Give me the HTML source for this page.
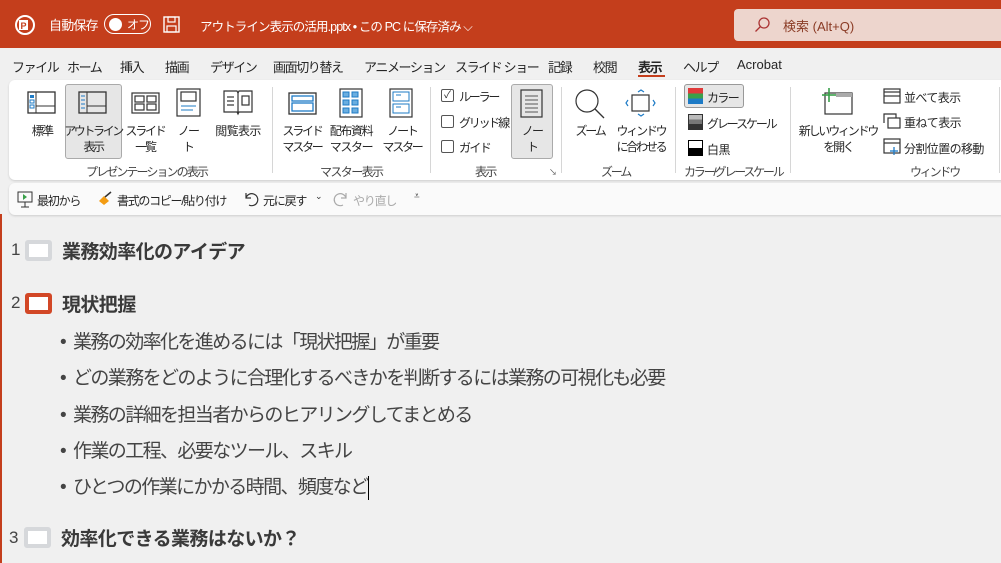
<!DOCTYPE html>
<html><head><meta charset="utf-8"><style>
*{margin:0;padding:0;box-sizing:border-box}
body{width:1001px;height:563px;overflow:hidden;background:#f0f0f0;font-family:"Liberation Sans","Noto Sans CJK JP",sans-serif;position:relative;color:#262626}
.a{position:absolute;white-space:nowrap}
.t{font-size:12px;color:#262626;letter-spacing:-1.6px}
.c{text-align:center;font-size:12px;line-height:16px;letter-spacing:-1.8px}
.tab{position:absolute;top:57px;font-size:13px;letter-spacing:-1.4px;white-space:nowrap}
.sep{position:absolute;width:1px;background:#d6d6d6;top:87px;height:86px}
.gl{position:absolute;font-size:12px;color:#444;top:163px;letter-spacing:-1.6px;white-space:nowrap}
.b{position:absolute;left:60px;font-size:19px;color:#444;line-height:24px;letter-spacing:-1.6px;white-space:nowrap}
.b i{font-style:normal;display:inline-block;width:13px;letter-spacing:0}
.h{position:absolute;font-size:19px;font-weight:bold;color:#3a3a3a;letter-spacing:-0.6px;white-space:nowrap}
</style></head><body>
<div class="a" style="left:0;top:0;width:1001px;height:48px;background:#c43e1c"></div>
<svg class="a" style="left:14px;top:14px" width="22" height="22"><circle cx="11" cy="11" r="9" fill="none" stroke="#fff" stroke-width="2"/><rect x="5" y="6" width="9" height="10" fill="#fff"/><text x="6.5" y="15" font-size="9" font-weight="bold" fill="#c43e1c" font-family="Liberation Sans">P</text></svg>
<div class="a" style="left:49px;top:15px;color:#fff;font-size:13px;letter-spacing:-0.8px">自動保存</div>
<div class="a" style="left:104px;top:14px;width:47px;height:20px;border:1.5px solid #fff;border-radius:10px"></div>
<div class="a" style="left:109px;top:18px;width:13px;height:13px;border-radius:50%;background:#fff"></div>
<div class="a" style="left:127px;top:16px;color:#fff;font-size:12px;letter-spacing:-1px">オフ</div>
<svg class="a" style="left:163px;top:16px" width="17" height="17"><rect x="1" y="1" width="15" height="15" fill="none" stroke="#fff" stroke-width="1.4"/><rect x="5" y="1" width="7" height="5" fill="none" stroke="#fff" stroke-width="1.2"/><rect x="4" y="10" width="9" height="6" fill="none" stroke="#fff" stroke-width="1.2"/></svg>
<div class="a" style="left:200px;top:16px;color:#fff;font-size:12.5px;letter-spacing:-0.9px">アウトライン表示の活用.pptx • この PC に保存済み ⌵</div>
<div class="a" style="left:734px;top:9px;width:267px;height:32px;background:#edd5cd;border-radius:4px 0 0 4px"></div>
<svg class="a" style="left:754px;top:17px" width="16" height="16"><circle cx="10" cy="6" r="5" fill="none" stroke="#a33" stroke-width="1.3"/><line x1="6.5" y1="9.5" x2="1.5" y2="14.5" stroke="#a33" stroke-width="1.3"/></svg>
<div class="a" style="left:783px;top:16px;font-size:13px;color:#8a3b25">検索 (Alt+Q)</div>
<div class="tab" style="left:12px">ファイル</div>
<div class="tab" style="left:67px">ホーム</div>
<div class="tab" style="left:120px">挿入</div>
<div class="tab" style="left:165px">描画</div>
<div class="tab" style="left:210px">デザイン</div>
<div class="tab" style="left:273px">画面切り替え</div>
<div class="tab" style="left:364px">アニメーション</div>
<div class="tab" style="left:455px">スライド ショー</div>
<div class="tab" style="left:548px">記録</div>
<div class="tab" style="left:593px">校閲</div>
<div class="tab" style="left:638px;font-weight:bold">表示</div>
<div class="a" style="top:75px;left:638px;width:27px;height:2px;background:#c43e1c"></div>
<div class="tab" style="left:683px">ヘルプ</div>
<div class="tab" style="left:737px;letter-spacing:0">Acrobat</div>
<div class="a" style="left:9px;top:80px;width:1000px;height:100px;background:#fff;border-radius:6px;box-shadow:0 1px 2px #ccc"></div>
<div class="a" style="left:65px;top:84px;width:57px;height:75px;background:#e6e6e6;border:1px solid #aaa;border-radius:3px"></div>
<div class="a" style="left:511px;top:84px;width:42px;height:75px;background:#e6e6e6;border:1px solid #aaa;border-radius:3px"></div>
<svg class="a" style="left:27px;top:91px" width="30" height="24"><rect x="1" y="1" width="27" height="21" fill="none" stroke="#333" stroke-width="1.3"/><line x1="9" y1="1" x2="9" y2="22" stroke="#333"/><line x1="9" y1="15" x2="28" y2="15" stroke="#333"/><rect x="3" y="4" width="4" height="3" fill="#1e7bc6"/><rect x="3" y="9" width="4" height="3" fill="none" stroke="#1e7bc6"/><rect x="3" y="14" width="4" height="3" fill="none" stroke="#1e7bc6"/></svg>
<svg class="a" style="left:78px;top:91px" width="30" height="24"><rect x="1" y="1" width="27" height="21" fill="none" stroke="#333" stroke-width="1.3"/><line x1="9" y1="1" x2="9" y2="22" stroke="#333"/><line x1="9" y1="15" x2="28" y2="15" stroke="#333"/><g stroke="#1e7bc6"><line x1="3" y1="5" x2="7" y2="5"/><line x1="3" y1="9" x2="7" y2="9"/><line x1="3" y1="13" x2="7" y2="13"/><line x1="3" y1="17" x2="7" y2="17"/></g></svg>
<svg class="a" style="left:131px;top:92px" width="30" height="22"><g fill="none" stroke="#333" stroke-width="1.2"><rect x="1" y="1" width="27" height="20"/><rect x="4" y="4" width="9" height="6"/><rect x="16" y="4" width="9" height="6"/><rect x="4" y="12" width="9" height="6"/><rect x="16" y="12" width="9" height="6"/></g></svg>
<svg class="a" style="left:176px;top:88px" width="26" height="30"><g fill="none" stroke="#333" stroke-width="1.2"><rect x="1" y="1" width="23" height="27"/><rect x="5" y="4" width="15" height="9"/></g><g stroke="#1e7bc6"><line x1="5" y1="18" x2="20" y2="18"/><line x1="5" y1="22" x2="17" y2="22"/></g></svg>
<svg class="a" style="left:222px;top:89px" width="32" height="28"><g fill="none" stroke="#333" stroke-width="1.2"><path d="M2 2h13l1 2 1-2h13v21H17l-1 2-1-2H2z"/><line x1="16" y1="4" x2="16" y2="24"/><line x1="5" y1="8" x2="12" y2="8"/><line x1="5" y1="12" x2="12" y2="12"/><line x1="5" y1="16" x2="12" y2="16"/><rect x="20" y="7" width="7" height="9"/></g></svg>
<div class="a c" style="left:22px;top:123px;width:40px">標準</div>
<div class="a c" style="left:63px;top:123px;width:60px;letter-spacing:-2.4px">アウトライン<br>表示</div>
<div class="a c" style="left:124px;top:123px;width:42px;letter-spacing:-2.2px">スライド<br>一覧</div>
<div class="a c" style="left:174px;top:123px;width:28px">ノー<br>ト</div>
<div class="a c" style="left:210px;top:123px;width:56px;letter-spacing:-0.6px">閲覧表示</div>
<div class="gl" style="left:86px;letter-spacing:-1.9px">プレゼンテーションの表示</div>
<div class="sep" style="left:272px"></div>
<svg class="a" style="left:288px;top:92px" width="30" height="24"><g fill="none" stroke="#1e7bc6" stroke-width="1.3"><rect x="1" y="1" width="27" height="21" stroke="#333"/><rect x="4" y="4" width="21" height="5"/><rect x="4" y="11" width="21" height="8"/></g></svg>
<svg class="a" style="left:339px;top:88px" width="24" height="30"><rect x="1" y="1" width="22" height="28" fill="none" stroke="#333" stroke-width="1.2"/><g fill="#6aaee0" stroke="#1e7bc6"><rect x="4" y="4" width="6" height="5"/><rect x="13" y="4" width="6" height="5"/><rect x="4" y="12" width="6" height="5"/><rect x="13" y="12" width="6" height="5"/><rect x="4" y="20" width="6" height="5"/><rect x="13" y="20" width="6" height="5"/></g></svg>
<svg class="a" style="left:389px;top:88px" width="24" height="30"><rect x="1" y="1" width="22" height="28" fill="none" stroke="#333" stroke-width="1.2"/><g fill="none" stroke="#1e7bc6"><rect x="4" y="4" width="16" height="9"/><rect x="4" y="16" width="16" height="9"/><line x1="7" y1="7" x2="12" y2="7"/><line x1="7" y1="19" x2="12" y2="19"/></g></svg>
<div class="a c" style="left:280px;top:123px;width:44px;letter-spacing:-2.2px">スライド<br>マスター</div>
<div class="a c" style="left:325px;top:123px;width:52px;letter-spacing:-1.4px">配布資料<br>マスター</div>
<div class="a c" style="left:380px;top:123px;width:44px;letter-spacing:-2.2px">ノート<br>マスター</div>
<div class="gl" style="left:320px">マスター表示</div>
<div class="sep" style="left:430px"></div>
<div class="a" style="left:441px;top:89px;width:13px;height:13px;border:1px solid #555;border-radius:2px;font-size:10px;line-height:11px;text-align:center">✓</div>
<div class="a" style="left:441px;top:115px;width:13px;height:13px;border:1px solid #555;border-radius:2px"></div>
<div class="a" style="left:441px;top:140px;width:13px;height:13px;border:1px solid #555;border-radius:2px"></div>
<div class="a t" style="left:459px;top:88px;letter-spacing:-2.2px">ルーラー</div>
<div class="a t" style="left:459px;top:114px;letter-spacing:-2.2px">グリッド線</div>
<div class="a t" style="left:459px;top:139px">ガイド</div>
<svg class="a" style="left:520px;top:89px" width="24" height="30"><rect x="1" y="1" width="21" height="27" fill="none" stroke="#333" stroke-width="1.2"/><g stroke="#555"><line x1="5" y1="7" x2="18" y2="7"/><line x1="5" y1="11" x2="18" y2="11"/><line x1="5" y1="15" x2="18" y2="15"/><line x1="5" y1="19" x2="18" y2="19"/><line x1="5" y1="23" x2="18" y2="23"/></g></svg>
<div class="a c" style="left:512px;top:123px;width:40px">ノー<br>ト</div>
<div class="gl" style="left:475px">表示</div>
<div class="a" style="left:549px;top:167px;font-size:8px;color:#555">↘</div>
<div class="sep" style="left:561px"></div>
<svg class="a" style="left:574px;top:88px" width="32" height="32"><circle cx="13" cy="13" r="11" fill="none" stroke="#333" stroke-width="1.2"/><line x1="21" y1="21" x2="30" y2="30" stroke="#333" stroke-width="1.3"/></svg>
<svg class="a" style="left:624px;top:89px" width="34" height="28"><rect x="8" y="6" width="17" height="16" fill="none" stroke="#333" stroke-width="1.2"/><g fill="none" stroke="#1e7bc6" stroke-width="1.2"><path d="M14 3l3-2 3 2"/><path d="M14 25l3 2 3-2"/><path d="M4 11l-2 3 2 3"/><path d="M29 11l2 3-2 3"/></g></svg>
<div class="a c" style="left:569px;top:123px;width:42px;letter-spacing:-2.2px">ズーム</div>
<div class="a c" style="left:611px;top:123px;width:60px;letter-spacing:-2.2px">ウィンドウ<br>に合わせる</div>
<div class="gl" style="left:601px;letter-spacing:-2.2px">ズーム</div>
<div class="sep" style="left:675px"></div>
<div class="a" style="left:684px;top:84px;width:60px;height:24px;background:#e6e6e6;border:1px solid #999;border-radius:3px"></div>
<div class="a" style="left:688px;top:88px;width:15px;height:16px;background:linear-gradient(#e03a3a 33%,#3aa04a 33% 66%,#1e7bc6 66%)"></div>
<div class="a t" style="left:707px;top:89px">カラー</div>
<div class="a" style="left:688px;top:114px;width:15px;height:16px;background:linear-gradient(#bbb 33%,#777 33% 66%,#333 66%);border:1px solid #333"></div>
<div class="a t" style="left:707px;top:115px;letter-spacing:-2.1px">グレースケール</div>
<div class="a" style="left:688px;top:140px;width:15px;height:16px;background:linear-gradient(#fff 50%,#000 50%);border:1px solid #000"></div>
<div class="a t" style="left:707px;top:141px;letter-spacing:-0.5px">白黒</div>
<div class="gl" style="left:684px;letter-spacing:-2.2px">カラー/グレースケール</div>
<div class="sep" style="left:790px"></div>
<svg class="a" style="left:820px;top:87px" width="34" height="28"><rect x="5" y="6" width="27" height="21" fill="none" stroke="#333" stroke-width="1.2"/><rect x="16" y="6" width="16" height="4" fill="#aaa"/><g stroke="#3aa04a" stroke-width="1.6"><line x1="9" y1="1" x2="9" y2="15"/><line x1="2" y1="8" x2="16" y2="8"/></g></svg>
<div class="a c" style="left:798px;top:123px;width:80px;letter-spacing:-2.2px">新しいウィンドウ<br>を開く</div>
<svg class="a" style="left:883px;top:88px" width="18" height="16"><g fill="none" stroke="#333" stroke-width="1.2"><rect x="1" y="1" width="16" height="14"/><line x1="1" y1="8" x2="17" y2="8"/><line x1="1" y1="4" x2="17" y2="4"/></g></svg>
<svg class="a" style="left:883px;top:113px" width="18" height="16"><g fill="none" stroke="#333" stroke-width="1.2"><path d="M1 10V1h12v4"/><rect x="5" y="5" width="12" height="10"/></g></svg>
<svg class="a" style="left:883px;top:138px" width="18" height="18"><g fill="none" stroke="#333" stroke-width="1.2"><rect x="1" y="1" width="16" height="14"/><line x1="1" y1="5" x2="17" y2="5"/></g><g stroke="#1e7bc6" stroke-width="1.3"><line x1="11" y1="9" x2="11" y2="17"/><line x1="7" y1="13" x2="15" y2="13"/></g></svg>
<div class="a t" style="left:904px;top:89px;letter-spacing:-0.6px">並べて表示</div>
<div class="a t" style="left:904px;top:114px;letter-spacing:-0.6px">重ねて表示</div>
<div class="a t" style="left:904px;top:140px;letter-spacing:-0.6px">分割位置の移動</div>
<div class="gl" style="left:910px;letter-spacing:-2.2px">ウィンドウ</div>
<div class="sep" style="left:999px"></div>
<div class="a" style="left:9px;top:183px;width:1000px;height:32px;background:#fafafa;border-radius:6px;box-shadow:0 1px 2px #ccc"></div>
<svg class="a" style="left:17px;top:191px" width="16" height="18"><rect x="1" y="1" width="14" height="10" fill="none" stroke="#333"/><path d="M6 3l4 3-4 3z" fill="#3aa04a"/><line x1="8" y1="11" x2="8" y2="16" stroke="#333"/><line x1="4" y1="16" x2="12" y2="16" stroke="#333"/></svg>
<div class="a t" style="left:37px;top:192px;letter-spacing:-1.2px">最初から</div>
<svg class="a" style="left:97px;top:191px" width="16" height="16"><path d="M2 10l5-5 5 5-5 4z" fill="#f39c12"/><path d="M8 6l6-5" stroke="#333" stroke-width="1.5"/></svg>
<div class="a t" style="left:117px;top:192px;letter-spacing:-1.3px">書式のコピー/貼り付け</div>
<svg class="a" style="left:243px;top:191px" width="16" height="16"><path d="M3 2v5h5M3 7a6 6 0 1 1 3 7" fill="none" stroke="#333" stroke-width="1.2"/></svg>
<div class="a t" style="left:263px;top:192px;letter-spacing:-1.2px">元に戻す</div>
<div class="a" style="left:315px;top:191px;font-size:9px;color:#333">⌄</div>
<svg class="a" style="left:333px;top:191px" width="16" height="16"><path d="M13 2v5H8M13 7a6 6 0 1 0-3 7" fill="none" stroke="#aaa" stroke-width="1.2"/></svg>
<div class="a t" style="left:353px;top:192px;color:#aaa;letter-spacing:-1.2px">やり直し</div>
<div class="a" style="left:414px;top:191px;font-size:10px;color:#333">⩡</div>
<div class="a" style="left:0;top:214px;width:2px;height:349px;background:#c43e1c"></div>
<div class="a" style="left:11px;top:240px;font-size:17px;color:#444">1</div>
<div class="a" style="left:25px;top:240px;width:27px;height:21px;border:4px solid #d6d8db;border-radius:3px;background:#fff"></div>
<div class="h" style="left:62px;top:237px">業務効率化のアイデア</div>
<div class="a" style="left:11px;top:293px;font-size:17px;color:#444">2</div>
<div class="a" style="left:25px;top:293px;width:27px;height:21px;border:4px solid #d24726;border-radius:3px;background:#fff"></div>
<div class="h" style="left:62px;top:290px">現状把握</div>
<div class="b" style="top:331px"><i>•</i>業務の効率化を進めるには「現状把握」が重要</div>
<div class="b" style="top:367px"><i>•</i>どの業務をどのように合理化するべきかを判断するには業務の可視化も必要</div>
<div class="b" style="top:404px"><i>•</i>業務の詳細を担当者からのヒアリングしてまとめる</div>
<div class="b" style="top:440px"><i>•</i>作業の工程、必要なツール、スキル</div>
<div class="b" style="top:476px"><i>•</i>ひとつの作業にかかる時間、頻度など<span style="display:inline-block;width:1px;height:24px;background:#000;vertical-align:top;margin-left:1px"></span></div>
<div class="a" style="left:9px;top:528px;font-size:17px;color:#444">3</div>
<div class="a" style="left:24px;top:527px;width:27px;height:21px;border:4px solid #d6d8db;border-radius:3px;background:#fff"></div>
<div class="h" style="left:61px;top:524px">効率化できる業務はないか？</div>
</body></html>
